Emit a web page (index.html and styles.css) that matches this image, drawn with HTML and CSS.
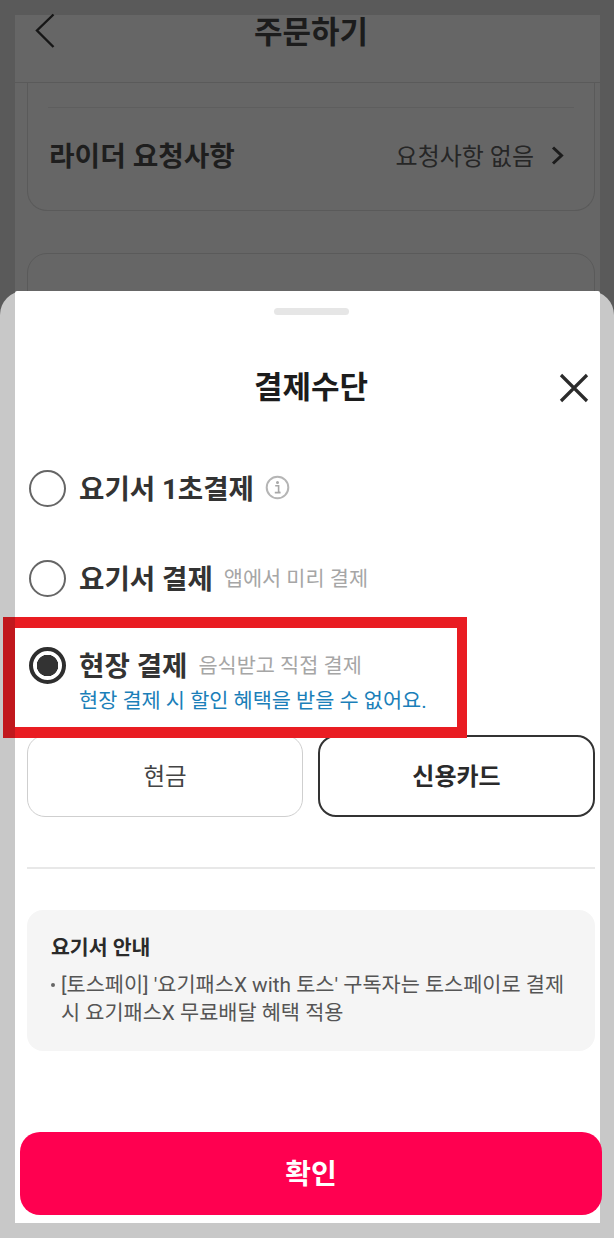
FILE: index.html
```html
<!DOCTYPE html>
<html lang="ko">
<head>
<meta charset="utf-8">
<title>결제수단</title>
<link rel="stylesheet" href="styles.css">
</head>
<body>
<div class="page">
  <div class="backdrop">
    <div class="screen">
      <header class="topbar">
        <svg class="back" width="20" height="36" viewBox="0 0 20 36"><path d="M18.5 1.5 2 17.5 18.5 34" fill="none" stroke="#161616" stroke-width="2.4"/></svg>
        <h1 class="topbar-title">주문하기</h1>
        <span></span>
      </header>
      <section class="card card-cut">
        <div class="card-line"></div>
        <div class="rider-row">
          <strong class="rider-label">라이더 요청사항</strong>
          <span class="rider-value">요청사항 없음</span>
          <svg class="rider-arrow" width="13" height="19" viewBox="0 0 13 19"><path d="M2 1.5 10.5 9.5 2 17.5" fill="none" stroke="#1c1c1c" stroke-width="3"/></svg>
        </div>
      </section>
      <section class="card card-next"></section>
    </div>
  </div>

  <div class="sheet">
    <div class="panel">
      <div class="handle"></div>
      <div class="sheet-head">
        <span></span>
        <h2 class="sheet-title">결제수단</h2>
        <svg class="close" width="30" height="30" viewBox="0 0 30 30"><path d="M2 2 28 28M28 2 2 28" fill="none" stroke="#2b2b2b" stroke-width="3.2"/></svg>
      </div>

      <div class="options">
        <div class="option">
          <span class="radio"></span>
          <div class="option-line">
            <strong class="option-name">요기서 1초결제</strong>
            <svg class="info" width="25" height="25" viewBox="0 0 25 25"><circle cx="12.5" cy="12.5" r="10.8" fill="none" stroke="#b5b5b5" stroke-width="2"/><circle cx="12.5" cy="7.6" r="1.5" fill="#a8a8a8"/><path d="M10.2 10.8h3.4v6.6h1.6M9.8 17.6h5.8" fill="none" stroke="#a8a8a8" stroke-width="1.6"/></svg>
          </div>
        </div>
        <div class="option option-mid">
          <span class="radio"></span>
          <div class="option-line">
            <strong class="option-name">요기서 결제</strong>
            <span class="option-sub">앱에서 미리 결제</span>
          </div>
        </div>
        <div class="option">
          <span class="radio radio-on"></span>
          <div class="option-line">
            <strong class="option-name">현장 결제</strong>
            <span class="option-sub">음식받고 직접 결제</span>
          </div>
          <p class="option-note">현장 결제 시 할인 혜택을 받을 수 없어요.</p>
        </div>
      </div>

      <div class="pay-types">
        <div class="pay-type pay-cash">현금</div>
        <div class="pay-type pay-card">신용카드</div>
      </div>

      <div class="rule"></div>

      <div class="notice">
        <h3 class="notice-title">요기서 안내</h3>
        <ul class="notice-list">
          <li class="notice-item">[토스페이] '요기패스X with 토스' 구독자는 토스페이로 결제 시 요기패스X 무료배달 혜택 적용</li>
        </ul>
      </div>

      <button class="confirm">확인</button>
    </div>
  </div>

  <div class="highlight"><span class="highlight-edge"></span></div>
</div>
</body>
</html>
```

FILE: styles.css
```css
* { box-sizing: border-box; }
html, body { margin: 0; padding: 0; }
body {
  font-family: Roboto, "Noto Sans CJK KR", sans-serif;
  background: #c8c8c8;
}
h1, h2, h3, p, ul { margin: 0; padding: 0; }

.page {
  position: relative;
  width: 614px;
  height: 1238px;
  overflow: hidden;
}

/* dimmed page behind the sheet */
.backdrop {
  height: 100%;
  padding: 15px 14px 0 15px;
  background: #5a5a5a;
}
.screen {
  height: 100%;
  padding: 0 5px 0 12px;
  background: #666;
}
.topbar {
  display: grid;
  grid-template-columns: 1fr auto 1fr;
  height: 68px;
  margin: 0 -5px 0 -12px;
  padding: 0 5px 0 12px;
  border-bottom: 1px solid #5a5a5a;
}
.back { margin: -2px 0 0 8px; }
.topbar-title {
  font-size: 31px;
  line-height: 36px;
  font-weight: 700;
  color: #1c1c1c;
}
.card {
  border: 1.5px solid #5a5a5a;
  border-radius: 20px;
}
.card-cut {
  height: 128px;
  padding: 24px 20px 0;
  border-top: 0;
  border-top-left-radius: 0;
  border-top-right-radius: 0;
}
.card-line { height: 1px; background: #5e5e5e; }
.rider-row {
  display: flex;
  align-items: center;
  height: 92px;
}
.rider-label {
  flex: 1;
  padding-left: 1px;
  font-size: 27.8px;
  font-weight: 700;
  color: #1e1e1e;
}
.rider-value {
  font-size: 24px;
  color: #262626;
}
.rider-arrow { margin: 3px 10px 0 17px; }
.card-next { height: 200px; margin-top: 42px; }

/* bottom sheet */
.sheet {
  position: absolute;
  top: 291px;
  left: 0;
  right: 0;
  bottom: 0;
  padding: 0 14px 15px 15px;
  background: #c8c8c8;
  border-radius: 24px 24px 0 0;
}
.panel {
  display: flex;
  flex-direction: column;
  height: 100%;
  padding: 0 5px 0 12px;
  background: #fff;
  border-radius: 2px 2px 0 0;
}
.handle {
  align-self: center;
  width: 75px;
  height: 7px;
  margin-top: 17px;
  border-radius: 4px;
  background: #e6e6e6;
}
.sheet-head {
  display: grid;
  grid-template-columns: 1fr auto 1fr;
  align-items: center;
  height: 56px;
  margin-top: 43px;
}
.sheet-title {
  padding-bottom: 4px;
  font-size: 31px;
  font-weight: 700;
  color: #1c1c1c;
}
.close { justify-self: end; margin: 3px 6px 0 0; }

.options {
  display: flex;
  flex-direction: column;
  gap: 50px;
  margin-top: 56px;
  padding-left: 2px;
}
.option {
  display: grid;
  grid-template-columns: 37px 1fr;
  column-gap: 13px;
}
.option-mid { margin-top: 3px; }
.radio {
  width: 37px;
  height: 37px;
  border: 2.5px solid #666;
  border-radius: 50%;
}
.radio-on {
  border: 4px solid #2e2e2e;
  background: radial-gradient(circle, #333 0 10.5px, #fff 11px);
}
.option-line {
  display: flex;
  align-items: center;
  height: 37px;
  margin-top: -2px;
}
.option-name {
  font-size: 27.6px;
  font-weight: 700;
  color: #333;
}
.option-sub {
  margin-left: 11px;
  font-size: 20.8px;
  color: #a6a6a6;
}
.info { margin-left: 11px; margin-top: 2px; }
.option-note {
  grid-column: 2;
  height: 30px;
  font-size: 20.8px;
  line-height: 34px;
  color: #1b7fb9;
  white-space: nowrap;
}

.pay-types {
  display: grid;
  grid-template-columns: 276px 277px;
  gap: 15px;
  margin-top: 21px;
}
.pay-type {
  display: flex;
  align-items: center;
  justify-content: center;
  height: 82px;
  padding-bottom: 3px;
  border-radius: 18px;
  font-size: 23.5px;
}
.pay-cash {
  border: 1.5px solid #cfcfcf;
  color: #444;
}
.pay-card {
  border: 2px solid #333;
  font-size: 24px;
  font-weight: 700;
  color: #2a2a2a;
}

.rule {
  height: 2px;
  margin-top: 50px;
  background: #e8e8e8;
}

.notice {
  height: 141px;
  margin-top: 41px;
  padding: 25px 24px 0;
  background: #f5f5f5;
  border-radius: 16px;
}
.notice-title {
  font-size: 20.5px;
  line-height: 26px;
  font-weight: 700;
  color: #2a2a2a;
}
.notice-list {
  margin-top: 10px;
  padding-left: 10px;
  list-style: none;
}
.notice-item {
  position: relative;
  font-size: 20.8px;
  line-height: 28px;
  color: #555;
}
.notice-item::before {
  content: "";
  position: absolute;
  left: -10px;
  top: 12px;
  width: 4px;
  height: 4px;
  border-radius: 50%;
  background: #666;
}

.confirm {
  flex: none;
  height: 83px;
  margin: auto -7px 8px;
  padding-bottom: 4px;
  border: 0;
  border-radius: 20px;
  background: #ff0050;
  color: #fff;
  font-family: inherit;
  font-size: 28px;
  font-weight: 700;
}

/* annotation drawn over the screenshot */
.highlight {
  position: absolute;
  left: 3px;
  top: 617px;
  width: 464px;
  height: 121px;
  border: solid #e91c22;
  border-width: 11px 10px 11px 12px;
}
.highlight-edge {
  position: absolute;
  left: -12px;
  top: -11px;
  bottom: -11px;
  width: 12px;
  background: #c1181d;
}
```
